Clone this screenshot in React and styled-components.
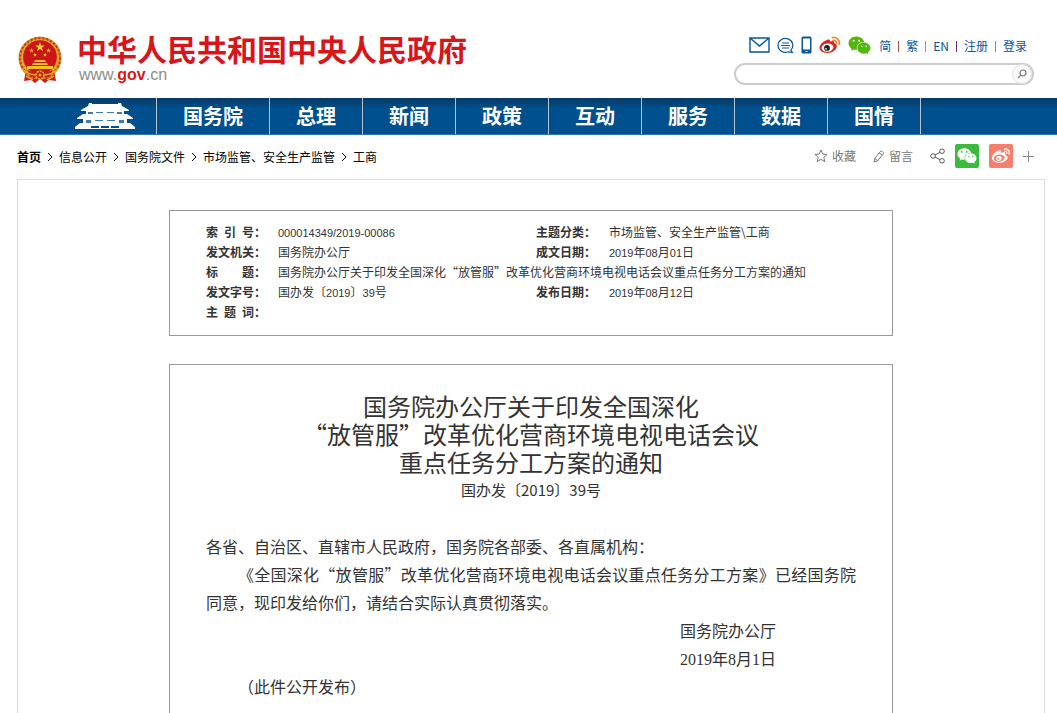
import React from "react";
import styled, { createGlobalStyle } from "styled-components";
import { FaWeixin, FaWeibo } from "react-icons/fa";

const GlobalStyle = createGlobalStyle`
  * {
    box-sizing: border-box;
  }

  body {
    margin: 0;
    background: #ffffff;
    color: #333333;
    font-family: "Noto Sans CJK SC", sans-serif;
    font-size: 12px;
  }

  a {
    color: inherit;
    text-decoration: none;
  }

  h1,
  p {
    margin: 0;
    font-weight: normal;
  }
`;

const Page = styled.div`
  display: flex;
  flex-direction: column;
  min-height: 100vh;
`;

const Header = styled.header`
  display: flex;
  justify-content: space-between;
  height: 98px;
  padding: 0 23px 0 17px;
`;

const Brand = styled.a`
  display: flex;
  align-items: center;
  gap: 14px;
  padding-top: 20px;
`;

const BrandName = styled.span`
  display: block;
  color: #d7151a;
  font-size: 30px;
  font-weight: bold;
  line-height: 30px;
`;

const BrandUrl = styled.span`
  display: block;
  padding: 2px 0 0 2px;
  color: #8c8c8c;
  font-family: "Liberation Sans", Arial, sans-serif;
  font-size: 16px;
  line-height: 20px;

  b {
    color: #d7151a;
  }
`;

const Tools = styled.div`
  display: flex;
  flex-direction: column;
  gap: 7px;
  width: 300px;
  padding-top: 36px;
`;

const ToolLinks = styled.div`
  display: flex;
  align-items: center;
  justify-content: flex-end;
  gap: 6px;
  height: 20px;
  padding-right: 7px;
  color: #0a559b;
  line-height: 20px;

  a {
    display: flex;
  }
`;

const IconGroup = styled.div`
  display: flex;
  align-items: center;
  flex: 1;
  justify-content: space-between;
  padding: 0 2px 2px 15px;
`;

const Divider = styled.i`
  width: 1px;
  height: 11px;
  margin: 0 1px;
  background: ${props => props.$color};
`;

const SearchForm = styled.form`
  display: flex;
  align-items: center;
  height: 22px;
  border: 2px solid #cccccc;
  border-radius: 11px;
`;

const SearchInput = styled.input`
  flex: 1;
  min-width: 0;
  height: 18px;
  padding: 0 10px;
  border: 0;
  outline: 0;
  background: transparent;
  font: inherit;
`;

const SearchButton = styled.button`
  display: flex;
  align-items: center;
  justify-content: center;
  width: 20px;
  height: 20px;
  padding: 0;
  border: 1px solid #e4e4e4;
  border-radius: 50%;
  background: #fafafa;
`;

const Nav = styled.nav`
  display: flex;
  height: 37px;
  background: linear-gradient(#083a66 0, #00508f 11px, #00508f 100%);
  border-bottom: 1px solid #3079b5;
`;

const NavHome = styled.a`
  display: flex;
  align-items: center;
  justify-content: flex-end;
  width: 157px;
  padding-right: 20px;
  border-right: 1px solid #b9c3cc;
`;

const NavItem = styled.a`
  padding: 0 26px;
  border-right: 1px solid #b9c3cc;
  color: #ffffff;
  font-size: 20px;
  font-weight: bold;
  line-height: 36px;
`;

const SubBar = styled.div`
  display: flex;
  align-items: center;
  justify-content: space-between;
  height: 44px;
  padding: 0 23px 0 17px;
`;

const Crumbs = styled.div`
  display: flex;
  align-items: center;
  gap: 6px;
  color: #000000;
  line-height: 20px;
`;

const Crumb = styled.a`
  font-weight: ${props => (props.$strong ? "bold" : "normal")};
`;

const Actions = styled.div`
  display: flex;
  align-items: center;
  gap: 10px;
  padding-bottom: 2px;
  color: #777777;
`;

const Action = styled.button`
  display: flex;
  align-items: center;
  gap: 4px;
  margin-right: 7px;
  padding: 0;
  border: 0;
  background: none;
  color: inherit;
  font: inherit;
  line-height: 20px;
`;

const IconAction = styled(Action)`
  margin-right: 0;
`;

const Share = styled.a`
  display: flex;
  align-items: center;
  justify-content: center;
  width: 24px;
  height: 24px;
  border-radius: 2px;
  background: ${props => props.$color};
  color: #ffffff;
`;

const Main = styled.main`
  display: flex;
  flex: 1;
  flex-direction: column;
  align-items: center;
  gap: 28px;
  margin: 0 12px 0 17px;
  padding-top: 30px;
  border: 1px solid #dddddd;
  border-bottom: 0;
`;

const Card = styled.section`
  width: 100%;
  max-width: 724px;
  padding: 11px 36px 13px;
  border: 1px solid #999999;
`;

const MetaTable = styled.table`
  width: 100%;
  border-collapse: collapse;
  table-layout: fixed;
  line-height: 20px;

  th,
  td {
    height: 20px;
    padding: 0;
    text-align: left;
    white-space: nowrap;
  }
`;

const LabelText = styled.span`
  display: inline-block;
  width: 48px;
  text-align-last: justify;
  vertical-align: top;
`;

const Num = styled.span`
  font-family: "Liberation Sans", Arial, sans-serif;
  font-size: 11px;
  line-height: 1;
`;

const Article = styled(Card)`
  flex: 1;
  padding: 27px 36px 0;
  border-bottom: 0;
  line-height: 28px;
`;

const Title = styled.h1`
  font-size: 24px;
  line-height: 28px;
  text-align: center;
`;

const DocNumber = styled.p`
  margin-bottom: 28px;
  font-size: 15px;
  text-align: center;
`;

const Paragraph = styled.p`
  font-size: 16px;
  text-align: justify;
  text-indent: ${props => (props.$indent ? "2em" : 0)};
`;

const Signature = styled.div`
  width: 96px;
  margin: 0 80px 0 auto;
  font-size: 16px;
  white-space: nowrap;
`;

const SongNum = styled.span`
  font-family: "Liberation Serif", "Times New Roman", serif;
  line-height: 1;
`;

const Emblem = () => (
  <svg width="46" height="50" viewBox="0 0 46 50" aria-hidden="true">
    <path d="M9 36 L7 47 L14 46 L18 49 L23 45 L28 49 L32 46 L39 47 L37 36Z" fill="#cf1a1b" />
    <circle cx="23" cy="24" r="21.5" fill="#d88a20" />
    <circle cx="23" cy="24" r="20" fill="none" stroke="#c43a1c" strokeWidth="2" strokeDasharray="2 2" />
    <circle cx="23" cy="24" r="18" fill="none" stroke="#e9b52c" strokeWidth="1.5" strokeDasharray="3 1" />
    <circle cx="23" cy="23" r="16.8" fill="#cc1518" />
    <path d="M23 8l1.2 3.5h3.7l-3 2.2 1.1 3.6-3-2.2-3 2.2 1.1-3.6-3-2.2h3.7z" fill="#f8cb30" />
    <g fill="#f3bd2b">
      <path d="M14.5 14l.6 1.8h1.9l-1.5 1.1.6 1.8-1.6-1.1-1.5 1.1.6-1.8-1.6-1.1h1.9z" />
      <path d="M31.5 14l.6 1.8H34l-1.5 1.1.6 1.8-1.6-1.1-1.5 1.1.6-1.8-1.6-1.1h1.9z" />
      <path d="M18 18.5l.5 1.6h1.7l-1.4 1 .6 1.7-1.4-1-1.4 1 .6-1.7-1.4-1h1.8z" />
      <path d="M28 18.5l.5 1.6h1.7l-1.4 1 .6 1.7-1.4-1-1.4 1 .6-1.7-1.4-1h1.8z" />
      <path d="M18 26h10l1 2H17zM16 29h14l1 2H15zM10 32h26v3H10z" />
    </g>
    <path d="M10 36c7 3 19 3 26 0l-4 7H14z" fill="#c4201b" />
    <circle cx="23" cy="41" r="4" fill="#c4201b" stroke="#edb72d" strokeWidth="1.5" strokeDasharray="2 1" />
    <circle cx="23" cy="41" r="1.5" fill="#e9aa28" />
    <path d="M4 34c5 5 9 7 15 7M42 34c-5 5-9 7-15 7M9 42l7 4M37 42l-7 4" fill="none" stroke="#e7a829" strokeWidth="1.5" />
  </svg>
);

const Palace = () => (
  <svg width="62" height="28" viewBox="0 0 62 28" aria-hidden="true">
    <g fill="#ffffff">
      <path d="M15 1h3v1h26V1h3l1 3 7 4v1H7V8l7-4z" />
      <path d="M12 9h38v3H12z" />
      <path d="M9 12h44l6 4v1H3v-1z" />
      <path d="M9 17h44v5H9z" />
      <path d="M6 21h50l5 4v2H1v-2z" />
    </g>
    <path d="M14 10h5v2h-5zM22 10h7v1h-7zM33 10h7v1h-7zM43 10h5v2h-5zM12 18h5v3h-5zM21 18h8v1h-8zM33 18h8v1h-8zM45 18h5v3h-5z" fill="#3f7db0" />
    <path d="M17 24h8v2h-8zM27 24h8v2h-8zM37 24h8v2h-8z" fill="#00508f" />
  </svg>
);

const MailIcon = () => (
  <svg width="21" height="16" viewBox="0 0 21 16" fill="none" stroke="currentColor" strokeWidth="1.4">
    <path d="M1 1h19v14H1zM1 1l9.5 8L20 1" />
  </svg>
);

const ChatIcon = () => (
  <svg width="17" height="17" viewBox="0 0 17 17" fill="none" stroke="currentColor" strokeWidth="1.2">
    <path d="M13.8 13.2a7.4 7 0 1 0-2.4 1.6l3.9.7zM5 6h7M4 8.5h9M5 11h7" />
  </svg>
);

const PhoneIcon = () => (
  <svg width="11" height="18" viewBox="0 0 11 18">
    <rect x="0.5" y="0.5" width="10" height="17" rx="1.5" fill="currentColor" />
    <path d="M2 2.5h7v11H2z" fill="#ffffff" />
    <path d="M4.5 15h2v1h-2z" fill="#ffffff" />
  </svg>
);

const WeiboIcon = () => (
  <svg width="22" height="18" viewBox="0 0 22 18">
    <path
      d="M8 4c1.7-.8 3.4-.6 2.9 1.6 2.5-1 4.900-.6 4.200 1.600 2.200.6 2.900 1.800 2.600 3.600C17.100 14.500 13 17 8.400 17 3.700 17 .5 14.900.5 11.800.5 8.700 4.700 5 8 4z"
      fill="#df2020"
    />
    <ellipse cx="8.5" cy="11.6" rx="6" ry="4.1" fill="#ffffff" transform="rotate(-8 8.5 11.6)" />
    <circle cx="8" cy="11.9" r="2.9" fill="#1d1d1d" />
    <circle cx="7" cy="12.8" r="0.9" fill="#ffffff" />
    <path d="M13.5 1.6c4.300-.8 7.600 2.300 6.600 6.700M14 4.500c2.300-.4 3.700 1 3.200 3.200" fill="none" stroke="#ee8730" strokeWidth="1.7" strokeLinecap="round" />
  </svg>
);

const SearchIcon = () => (
  <svg width="10" height="10" viewBox="0 0 10 10" fill="none" stroke="#777777" strokeWidth="1.2">
    <circle cx="6" cy="4" r="3" />
    <path d="M3.8 6.2L1 9" />
  </svg>
);

const StarIcon = () => (
  <svg width="14" height="14" viewBox="0 0 14 14" fill="none" stroke="currentColor">
    <path d="M7 1l1.800 4 4.200.4-3.200 2.900 1 4.300L7 10.400l-3.800 2.200 1-4.300L1 5.400 5.200 5z" />
  </svg>
);

const PencilIcon = () => (
  <svg width="12" height="13" viewBox="0 0 12 13" fill="none" stroke="currentColor">
    <path d="M1 12l.8-3.600L7.500 1.300c.8-.9 3.800 1.100 3 2.300L4.700 10.700zM1.800 8.400l2.900 2.300M6.300 3l3 2.200" />
  </svg>
);

const ShareIcon = () => (
  <svg width="15" height="16" viewBox="0 0 15 16" fill="none" stroke="#555555">
    <circle cx="3" cy="8" r="2.3" />
    <circle cx="12" cy="3.2" r="2.3" />
    <circle cx="12" cy="12.8" r="2.3" />
    <path d="M5 7l5-2.700M5 9l5 2.700" />
  </svg>
);

const PlusIcon = () => (
  <svg width="11" height="11" viewBox="0 0 11 11" stroke="#888888">
    <path d="M0 5.5h11M5.5 0v11" />
  </svg>
);

const navItems = ["国务院", "总理", "新闻", "政策", "互动", "服务", "数据", "国情"];

const crumbs = ["首页", "信息公开", "国务院文件", "市场监管、安全生产监管", "工商"];

const languages = [
  { label: "简", divider: "#a5563a" },
  { label: "繁", divider: "#d28a4e" },
  { label: "EN", divider: "#6f2a78" },
  { label: "注册", divider: "#4f9bd0" },
  { label: "登录" }
];

// splits "2019年08月01日" so that the digits keep half the width of a character
const withNumbers = (text, Digits) =>
  text
    .split(/([0-9/-]+)/)
    .map((part, i) => (i % 2 ? <Digits key={i}>{part}</Digits> : part));

const Label = ({ children }) => (
  <th scope="row">
    <LabelText>{children}</LabelText>：
  </th>
);

const Value = ({ children, ...rest }) => (
  <td {...rest}>{withNumbers(children, Num)}</td>
);

const SiteHeader = () => (
  <Header>
    <Brand href="#">
      <Emblem />
      <span>
        <BrandName>中华人民共和国中央人民政府</BrandName>
        <BrandUrl>
          www.<b>gov</b>.cn
        </BrandUrl>
      </span>
    </Brand>
    <Tools>
      <ToolLinks>
        <IconGroup>
          <a href="#" aria-label="邮箱"><MailIcon /></a>
          <a href="#" aria-label="留言"><ChatIcon /></a>
          <a href="#" aria-label="客户端"><PhoneIcon /></a>
          <a href="#" aria-label="微博"><WeiboIcon /></a>
          <a href="#" aria-label="微信"><FaWeixin size={23} color="#51b70b" /></a>
        </IconGroup>
        {languages.map(item => (
          <React.Fragment key={item.label}>
            <a href="#">{item.label}</a>
            {item.divider && <Divider $color={item.divider} />}
          </React.Fragment>
        ))}
      </ToolLinks>
      <SearchForm onSubmit={e => e.preventDefault()}>
        <SearchInput type="text" aria-label="搜索" />
        <SearchButton type="submit" aria-label="提交搜索">
          <SearchIcon />
        </SearchButton>
      </SearchForm>
    </Tools>
  </Header>
);

const App = () => (
  <Page lang="zh-CN">
    <GlobalStyle />
    <SiteHeader />
    <Nav>
      <NavHome href="#" aria-label="首页">
        <Palace />
      </NavHome>
      {navItems.map(item => (
        <NavItem href="#" key={item}>
          {item}
        </NavItem>
      ))}
    </Nav>
    <SubBar>
      <Crumbs>
        {crumbs.map((item, i) => (
          <React.Fragment key={item}>
            {i > 0 && (
              <svg width="6" height="10" viewBox="0 0 6 10" fill="none" stroke="#000000">
                <path d="M1 1l4 4-4 4" />
              </svg>
            )}
            <Crumb href="#" $strong={i === 0}>
              {item}
            </Crumb>
          </React.Fragment>
        ))}
      </Crumbs>
      <Actions>
        <Action type="button">
          <StarIcon />
          收藏
        </Action>
        <Action type="button">
          <PencilIcon />
          留言
        </Action>
        <IconAction type="button" aria-label="分享">
          <ShareIcon />
        </IconAction>
        <Share href="#" $color="#3abb3e" aria-label="分享到微信">
          <FaWeixin size={20} />
        </Share>
        <Share href="#" $color="#f57e6c" aria-label="分享到微博">
          <FaWeibo size={18} />
        </Share>
        <IconAction type="button" aria-label="更多">
          <PlusIcon />
        </IconAction>
      </Actions>
    </SubBar>
    <Main>
      <Card>
        <MetaTable>
          <colgroup>
            <col width="72" />
            <col width="258" />
            <col width="73" />
            <col />
          </colgroup>
          <tbody>
            <tr>
              <Label>索 引 号</Label>
              <Value>000014349/2019-00086</Value>
              <Label>主题分类</Label>
              <Value>市场监管、安全生产监管\工商</Value>
            </tr>
            <tr>
              <Label>发文机关</Label>
              <Value>国务院办公厅</Value>
              <Label>成文日期</Label>
              <Value>2019年08月01日</Value>
            </tr>
            <tr>
              <Label>标 题</Label>
              <Value colSpan={3}>
                国务院办公厅关于印发全国深化“放管服”改革优化营商环境电视电话会议重点任务分工方案的通知
              </Value>
            </tr>
            <tr>
              <Label>发文字号</Label>
              <Value>国办发〔2019〕39号</Value>
              <Label>发布日期</Label>
              <Value>2019年08月12日</Value>
            </tr>
            <tr>
              <Label>主 题 词</Label>
              <td colSpan={3} />
            </tr>
          </tbody>
        </MetaTable>
      </Card>
      <Article>
        <Title>
          国务院办公厅关于印发全国深化
          <br />
          “放管服”改革优化营商环境电视电话会议
          <br />
          重点任务分工方案的通知
        </Title>
        <DocNumber>国办发〔2019〕39号</DocNumber>
        <Paragraph>各省、自治区、直辖市人民政府，国务院各部委、各直属机构：</Paragraph>
        <Paragraph $indent>
          《全国深化“放管服”改革优化营商环境电视电话会议重点任务分工方案》已经国务院同意，现印发给你们，请结合实际认真贯彻落实。
        </Paragraph>
        <Signature>
          <p>国务院办公厅</p>
          <p>{withNumbers("2019年8月1日", SongNum)}</p>
        </Signature>
        <Paragraph $indent>（此件公开发布）</Paragraph>
      </Article>
    </Main>
  </Page>
);

export default App;
